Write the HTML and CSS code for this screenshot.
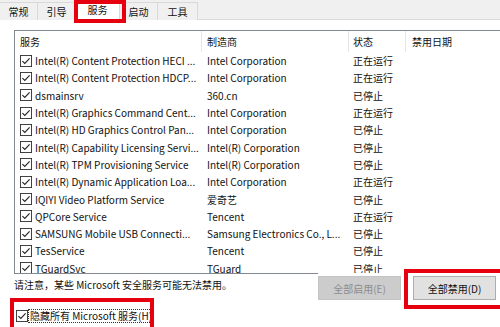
FILE: index.html
```html
<!DOCTYPE html>
<html lang="zh-CN">
<head>
<meta charset="utf-8">
<title>系统配置 - 服务</title>
<link rel="stylesheet" href="styles.css">
</head>
<body>
<div class="window">
  <div class="tabs">
    <div class="tab t1">常规</div>
    <div class="tab t2">引导</div>
    <div class="tab t3 active">服务</div>
    <div class="tab t4">启动</div>
    <div class="tab t5">工具</div>
  </div>
  <div class="panel">
    <div class="list">
      <div class="row head">
        <div class="cell c1">服务</div>
        <div class="cell c2">制造商</div>
        <div class="cell c3">状态</div>
        <div class="cell c4">禁用日期</div>
      </div>
      <div class="row"><div class="cell c1"><svg class="cb" viewBox="0 0 13 13"><rect x="0.5" y="0.5" width="12" height="12"/><path d="M2.6 6.6 L5.2 9.2 L10.4 3.6"/></svg><span>Intel(R) Content Protection HECI ...</span></div><div class="cell c2">Intel Corporation</div><div class="cell c3">正在运行</div><div class="cell c4"></div></div>
      <div class="row"><div class="cell c1"><svg class="cb" viewBox="0 0 13 13"><rect x="0.5" y="0.5" width="12" height="12"/><path d="M2.6 6.6 L5.2 9.2 L10.4 3.6"/></svg><span>Intel(R) Content Protection HDCP...</span></div><div class="cell c2">Intel Corporation</div><div class="cell c3">正在运行</div><div class="cell c4"></div></div>
      <div class="row"><div class="cell c1"><svg class="cb" viewBox="0 0 13 13"><rect x="0.5" y="0.5" width="12" height="12"/><path d="M2.6 6.6 L5.2 9.2 L10.4 3.6"/></svg><span>dsmainsrv</span></div><div class="cell c2">360.cn</div><div class="cell c3">已停止</div><div class="cell c4"></div></div>
      <div class="row"><div class="cell c1"><svg class="cb" viewBox="0 0 13 13"><rect x="0.5" y="0.5" width="12" height="12"/><path d="M2.6 6.6 L5.2 9.2 L10.4 3.6"/></svg><span>Intel(R) Graphics Command Cent...</span></div><div class="cell c2">Intel Corporation</div><div class="cell c3">正在运行</div><div class="cell c4"></div></div>
      <div class="row"><div class="cell c1"><svg class="cb" viewBox="0 0 13 13"><rect x="0.5" y="0.5" width="12" height="12"/><path d="M2.6 6.6 L5.2 9.2 L10.4 3.6"/></svg><span>Intel(R) HD Graphics Control Pan...</span></div><div class="cell c2">Intel Corporation</div><div class="cell c3">已停止</div><div class="cell c4"></div></div>
      <div class="row"><div class="cell c1"><svg class="cb" viewBox="0 0 13 13"><rect x="0.5" y="0.5" width="12" height="12"/><path d="M2.6 6.6 L5.2 9.2 L10.4 3.6"/></svg><span>Intel(R) Capability Licensing Servi...</span></div><div class="cell c2">Intel(R) Corporation</div><div class="cell c3">已停止</div><div class="cell c4"></div></div>
      <div class="row"><div class="cell c1"><svg class="cb" viewBox="0 0 13 13"><rect x="0.5" y="0.5" width="12" height="12"/><path d="M2.6 6.6 L5.2 9.2 L10.4 3.6"/></svg><span>Intel(R) TPM Provisioning Service</span></div><div class="cell c2">Intel(R) Corporation</div><div class="cell c3">已停止</div><div class="cell c4"></div></div>
      <div class="row"><div class="cell c1"><svg class="cb" viewBox="0 0 13 13"><rect x="0.5" y="0.5" width="12" height="12"/><path d="M2.6 6.6 L5.2 9.2 L10.4 3.6"/></svg><span>Intel(R) Dynamic Application Loa...</span></div><div class="cell c2">Intel Corporation</div><div class="cell c3">正在运行</div><div class="cell c4"></div></div>
      <div class="row"><div class="cell c1"><svg class="cb" viewBox="0 0 13 13"><rect x="0.5" y="0.5" width="12" height="12"/><path d="M2.6 6.6 L5.2 9.2 L10.4 3.6"/></svg><span>IQIYI Video Platform Service</span></div><div class="cell c2">爱奇艺</div><div class="cell c3">已停止</div><div class="cell c4"></div></div>
      <div class="row"><div class="cell c1"><svg class="cb" viewBox="0 0 13 13"><rect x="0.5" y="0.5" width="12" height="12"/><path d="M2.6 6.6 L5.2 9.2 L10.4 3.6"/></svg><span>QPCore Service</span></div><div class="cell c2">Tencent</div><div class="cell c3">正在运行</div><div class="cell c4"></div></div>
      <div class="row"><div class="cell c1"><svg class="cb" viewBox="0 0 13 13"><rect x="0.5" y="0.5" width="12" height="12"/><path d="M2.6 6.6 L5.2 9.2 L10.4 3.6"/></svg><span>SAMSUNG Mobile USB Connecti...</span></div><div class="cell c2">Samsung Electronics Co., L...</div><div class="cell c3">已停止</div><div class="cell c4"></div></div>
      <div class="row"><div class="cell c1"><svg class="cb" viewBox="0 0 13 13"><rect x="0.5" y="0.5" width="12" height="12"/><path d="M2.6 6.6 L5.2 9.2 L10.4 3.6"/></svg><span>TesService</span></div><div class="cell c2">Tencent</div><div class="cell c3">已停止</div><div class="cell c4"></div></div>
      <div class="row"><div class="cell c1"><svg class="cb" viewBox="0 0 13 13"><rect x="0.5" y="0.5" width="12" height="12"/><path d="M2.6 6.6 L5.2 9.2 L10.4 3.6"/></svg><span>TGuardSvc</span></div><div class="cell c2">TGuard</div><div class="cell c3">已停止</div><div class="cell c4"></div></div>
    </div>
    <div class="footer">
      <div class="note">请注意，某些 Microsoft 安全服务可能无法禁用。</div>
      <div class="buttons">
        <button class="btn disabled" disabled>全部启用(E)</button>
        <button class="btn primary">全部禁用(D)</button>
      </div>
    </div>
    <div class="hide-row">
      <svg class="cb" viewBox="0 0 13 13"><rect x="0.5" y="0.5" width="12" height="12"/><path d="M2.6 6.6 L5.2 9.2 L10.4 3.6"/></svg>
      <span class="focus">隐藏所有 Microsoft 服务(H)</span>
    </div>
  </div>
  <div class="mark mark-tab"></div>
  <div class="mark mark-btn"></div>
  <div class="mark mark-hide"></div>
</div>
</body>
</html>
```

FILE: styles.css
```css
* { box-sizing: border-box; }
html, body {
  margin: 0;
  padding: 0;
  width: 500px;
  height: 327px;
  overflow: hidden;
  background: #ffffff;
}
body {
  font-family: "Noto Sans CJK SC", "Noto Sans", sans-serif;
  font-size: 10px;
  color: #111;
}
.window {
  position: relative;
  width: 500px;
  height: 327px;
  overflow: hidden;
}
.tabs {
  display: flex;
  height: 20px;
  background: #f0f0f0;
  border-bottom: 1px solid #d9d9d9;
  align-items: flex-end;
}
.tab {
  height: 18px;
  margin-bottom: -1px;
  border: 1px solid #d9d9d9;
  border-bottom: none;
  border-left: none;
  background: #f0f0f0;
  display: flex;
  align-items: center;
  justify-content: center;
  line-height: 1;
  color: #111;
}
.t1 { width: 38px; }
.t2 { width: 38px; }
.t3 { width: 44px; }
.t4 { width: 38px; }
.t5 { width: 40px; }
.tab.active {
  background: #ffffff;
  height: 21px;
  border-bottom: 1px solid #fff;
}
.panel {
  padding: 10px 0 0 14px;
  background: #fff;
}
.list {
  width: 520px;
  height: 243px;
  border: 1px solid #828790;
  border-right: none;
  border-bottom: none;
  overflow: hidden;
  background: #fff;
}
.row {
  display: grid;
  grid-template-columns: 187px 147px 57px 1fr;
  height: 17.3px;
  align-items: center;
  white-space: nowrap;
}
.row.head {
  height: 21px;
}
.head .cell {
  height: 21px;
  display: flex;
  align-items: center;
  border-right: 1px solid #e5e5e5;
}
.head .c4 { padding-left: 6px; border-right: none; }
.cell {
  overflow: hidden;
  display: flex;
  align-items: center;
  line-height: 17px;
}
.c1 { padding-left: 5px; }
.c2 { padding-left: 5px; }
.c3 { padding-left: 4px; }
.cb {
  width: 12px;
  height: 12px;
  flex: none;
  margin-right: 3px;
}
.cb rect {
  fill: #fff;
  stroke: #333;
  stroke-width: 1;
}
.cb path {
  fill: none;
  stroke: #222;
  stroke-width: 1.2;
}
.footer {
  display: flex;
  align-items: flex-start;
}
.note {
  width: 304px;
  border-top: 1px solid #828790;
  padding-top: 3px;
  line-height: 16px;
}
.buttons {
  display: flex;
  gap: 12px;
  margin-top: 3px;
}
.btn {
  width: 83px;
  height: 24px;
  font: inherit;
  font-size: 10px;
  border: 1px solid #adadad;
  background: #e1e1e1;
  color: #111;
  padding: 0;
}
.btn.disabled {
  background: #cccccc;
  border-color: #c4c4c4;
  color: #8c8c8c;
}
.hide-row {
  display: flex;
  align-items: center;
  margin-top: 9px;
  margin-left: 2px;
  height: 14px;
}
.hide-row .cb { margin-right: 0; }
.focus {
  border: 1px dotted #333;
  line-height: 12px;
  padding: 0 1px;
  white-space: nowrap;
}
.mark {
  position: absolute;
  border: 4px solid #e6000f;
  pointer-events: none;
}
.mark-tab { left: 74px; top: 0; width: 52px; height: 23px; }
.mark-btn { left: 404px; top: 269px; width: 110px; height: 40px; }
.mark-hide { left: 10px; top: 298px; width: 144px; height: 34px; }
```
